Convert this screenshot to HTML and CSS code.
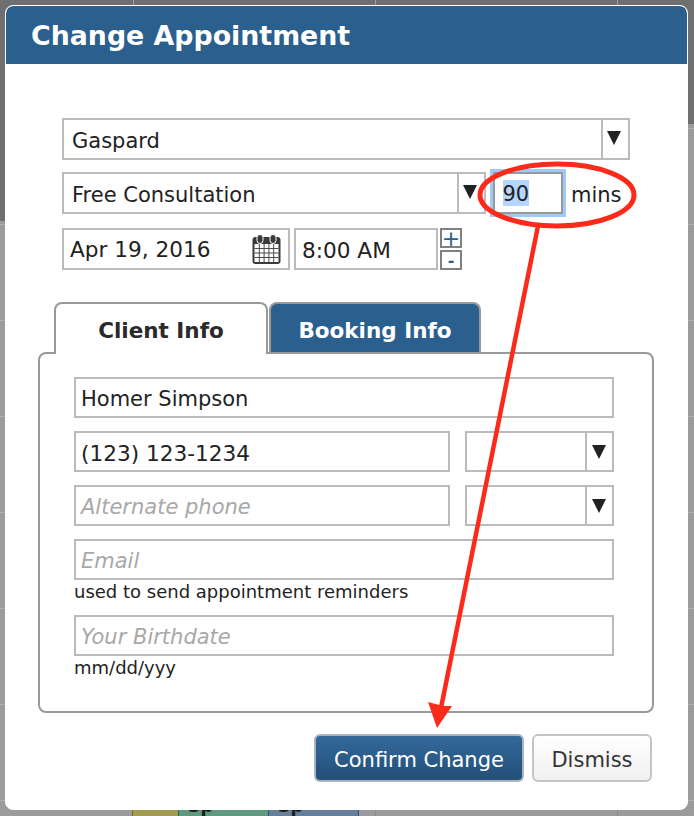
FILE: index.html
```html
<!DOCTYPE html>
<html>
<head>
	<title>Change Appointment</title>
	<link rel="stylesheet" href="styles.css">
</head>
<body>
	<div class="shade shadeLeft"></div>
	<div class="shade shadeRight"></div>
	<div class="backdrop">
		<div class="slot slotYellow"></div>
		<div class="slot slotGreen">3p</div>
		<div class="slot slotBlue">3p</div>
	</div>

	<div class="modal">
		<h1 class="modalTitle">Change Appointment</h1>
		<div class="modalBody">
			<div class="apptFields">
				<div class="row">
					<div class="field select wStaff"><span class="value">Gaspard</span><span class="arrow"></span></div>
				</div>
				<div class="row">
					<div class="field select wService"><span class="value">Free Consultation</span><span class="arrow"></span></div>
					<div class="field duration"><span class="selected">90</span></div>
					<span class="mins">mins</span>
				</div>
				<div class="row rowDate">
					<div class="field date">
						<span class="value digits">Apr 19, 2016</span>
						<svg class="calIcon" width="29" height="30" viewBox="0 0 29 30">
							<rect x="0.500" y="3" width="28" height="27" rx="3" fill="#3a3a3a"/>
							<rect x="2.500" y="10" width="24" height="18" fill="#fff"/>
							<path d="M2.500 14.500h24M2.500 19h24M2.500 23.500h24M7.300 10v18M12.100 10v18M16.900 10v18M21.700 10v18" stroke="#4a4a4a" stroke-width="1"/>
							<rect x="5" y="0.500" width="6" height="9" rx="3" fill="#3a3a3a" stroke="#fff" stroke-width="1"/>
							<rect x="18" y="0.500" width="6" height="9" rx="3" fill="#3a3a3a" stroke="#fff" stroke-width="1"/>
						</svg>
					</div>
					<div class="field time"><span class="value digits">8:00 AM</span></div>
					<div class="stepper">
						<button class="step plus">+</button>
						<button class="step minus">-</button>
					</div>
				</div>
			</div>

			<div class="tabs">
				<div class="tab active">Client Info</div>
				<div class="tab">Booking Info</div>
			</div>
			<div class="tabPanel">
				<div class="field full"><span class="value">Homer Simpson</span></div>
				<div class="phoneRow">
					<div class="field phone"><span class="value digits">(123) 123-1234</span></div>
					<div class="field select phoneType"><span class="value"></span><span class="arrow"></span></div>
				</div>
				<div class="phoneRow">
					<div class="field phone"><span class="value hint">Alternate phone</span></div>
					<div class="field select phoneType"><span class="value"></span><span class="arrow"></span></div>
				</div>
				<div class="field full email"><span class="value hint">Email</span></div>
				<p class="note">used to send appointment reminders</p>
				<div class="field full birth"><span class="value hint">Your Birthdate</span></div>
				<p class="note">mm/dd/yyy</p>
			</div>

			<div class="actions">
				<button class="btn primary">Confirm Change</button>
				<button class="btn">Dismiss</button>
			</div>
		</div>
	</div>

	<!-- red annotation drawn over the screenshot -->
	<svg class="annotation" width="694" height="816" viewBox="0 0 694 816">
		<ellipse cx="557" cy="195" rx="77" ry="31" fill="none" stroke="#fb2a1a" stroke-width="5"/>
		<path d="M538 226L441 708" stroke="#fb2a1a" stroke-width="4.500" fill="none"/>
		<path d="M428 702L443 706L452 706L437 728Z" fill="#fb2a1a"/>
	</svg>
</body>
</html>
```
FILE: styles.css
```css
*{
	margin: 0;
	padding: 0;
	box-sizing: border-box;
}

body{
	position: relative;
	width: 694px;
	height: 816px;
	overflow: hidden;
	padding: 5px 6px 6px 5px;
	background-color: #9b9b9b;
	background-image:
		linear-gradient(#b0b0b0 1px, transparent 1px),
		linear-gradient(90deg, #8a8a8a 1px, transparent 1px);
	background-size: 100% 96px, 242px 100%;
	background-position: 0 32px, 133px 0;
	font: normal 21px "DejaVu Sans", Verdana, sans-serif;
	color: #222;
}

.shade{
	position: absolute;
	top: 0;
	width: 100%;
	background-color: #6f6f6f;
	background-image: linear-gradient(90deg, #a0a0a0 1px, transparent 1px);
	background-size: 242px 100%;
	background-position: 133px 0;
}

.shadeLeft{
	left: 0;
	width: 347px;
	height: 221px;
}

.shadeRight{
	right: 0;
	width: 347px;
	height: 124px;
	background-position: -214px 0;
}

.backdrop{
	position: absolute;
	left: 132px;
	top: 796px;
	display: flex;
}

.slot{
	width: 90px;
	height: 20px;
	padding-left: 9px;
	font-size: 18px;
	font-weight: bold;
	line-height: 20px;
	color: #1c1c1c;
}

.slotYellow{
	width: 46px;
	border-left: 1px solid #7a6a10;
	background-color: #a39a52;
}

.slotGreen{
	border-left: 1px solid #1d6a5c;
	background-color: #5f9a80;
}

.slotBlue{
	width: 91px;
	border-left: 1px solid #1c5a8a;
	border-right: 1px solid #1c5a8a;
	background-color: #66809c;
}

.modal{
	position: relative;
	width: 683px;
	height: 805px;
	border: 1px solid #fff;
	border-radius: 8px;
	background-color: #fff;
	overflow: hidden;
}

.modalTitle{
	height: 58px;
	padding: 0 25px;
	border-radius: 7px 7px 0 0;
	background-color: #2b5f8e;
	font-size: 26.800px;
	font-weight: bold;
	line-height: 60px;
	color: #fff;
}

.modalBody{
	padding: 54px 0 0 32px;
}

.apptFields{
	padding-left: 24px;
}

.row{
	display: flex;
	align-items: center;
	margin-bottom: 12px;
}

.rowDate{
	margin-top: 14px;
	gap: 4px;
}

.field{
	display: flex;
	height: 42px;
	border: 2px solid #bbb;
	background-color: #fff;
	line-height: 38px;
}

.value{
	flex: 1;
	padding: 2px 0 0 8px;
	white-space: nowrap;
}

.digits{
	font-size: 21.600px;
}

.hint{
	font-style: italic;
	color: #a8a8a8;
}

.arrow{
	position: relative;
	flex: none;
	width: 27px;
	border-left: 2px solid #bbb;
}

.arrow::after{
	content: "";
	position: absolute;
	left: 4px;
	top: 11px;
	border-left: 7.500px solid transparent;
	border-right: 7.500px solid transparent;
	border-top: 14px solid #222;
}

.wStaff{
	width: 568px;
}

.wService{
	width: 424px;
}

.duration{
	width: 70px;
	margin-left: 7px;
	padding-left: 7.500px;
	border-color: #999;
	box-shadow: 0 0 0 3px #9ecaf8;
}

.selected{
	display: inline-block;
	height: 26px;
	margin-top: 6px;
	line-height: 28px;
	background-color: #b4d5fe;
}

.mins{
	margin-left: 8px;
	padding-top: 3px;
}

.date{
	width: 228px;
	align-items: center;
}

.date .value, .time .value{
	padding-left: 6px;
}

.calIcon{
	margin-right: 7px;
}

.time{
	width: 144px;
}

.stepper{
	display: flex;
	flex-direction: column;
	gap: 2px;
	margin-left: -2px;
}

.step{
	display: flex;
	align-items: center;
	justify-content: center;
	width: 22px;
	height: 20px;
	border: 2px solid #808080;
	background-color: #fff;
	font-family: "DejaVu Sans", Verdana, sans-serif;
	color: #2b5f8e;
}

.plus{
	font-size: 22px;
}

.minus{
	font-size: 16px;
	font-weight: bold;
}

.tabs{
	display: flex;
	margin: 32px 0 0 16px;
}

.tab{
	position: relative;
	width: 212px;
	height: 50px;
	margin-left: 1px;
	border: 2px solid #999;
	border-bottom: 0;
	border-radius: 8px 8px 0 0;
	background-color: #2b5f8e;
	font-size: 21.500px;
	font-weight: bold;
	line-height: 54px;
	text-align: center;
	color: #fff;
}

.tab.active{
	z-index: 1;
	width: 214px;
	height: 52px;
	margin-left: 0;
	margin-bottom: -2px;
	background-color: #fff;
	color: #2a2a2a;
}

.tabPanel{
	width: 616px;
	height: 361px;
	padding: 23px 38px 0 34px;
	border: 2px solid #999;
	border-radius: 8px;
}

.tabPanel .field{
	height: 41px;
	line-height: 37px;
}

.tabPanel .value{
	padding-left: 5px;
}

.tabPanel .arrow::after{
	left: 5px;
	top: 12px;
}

.full{
	width: 540px;
}

.phoneRow{
	display: flex;
	justify-content: space-between;
	width: 540px;
	margin-top: 13px;
}

.email{
	margin-top: 13px;
}

.phone{
	width: 376px;
}

.phoneType{
	width: 149px;
}

.note{
	margin-top: 1px;
	font-size: 18px;
	line-height: 21px;
}

.birth{
	margin-top: 13px;
}

.actions{
	display: flex;
	justify-content: flex-end;
	gap: 8px;
	width: 614px;
	margin-top: 21px;
}

.btn{
	width: 120px;
	height: 48px;
	padding-top: 3px;
	border: 2px solid #c4c4c4;
	border-radius: 6px;
	background: linear-gradient(#fff, #f0f0f0);
	font: normal 21px "DejaVu Sans", Verdana, sans-serif;
	color: #333;
}

.btn.primary{
	width: 210px;
	background: linear-gradient(#33699b, #234f78);
	border-color: #a9b4bf;
	color: #fff;
}

.annotation{
	position: absolute;
	left: 0;
	top: 0;
	pointer-events: none;
}
```
